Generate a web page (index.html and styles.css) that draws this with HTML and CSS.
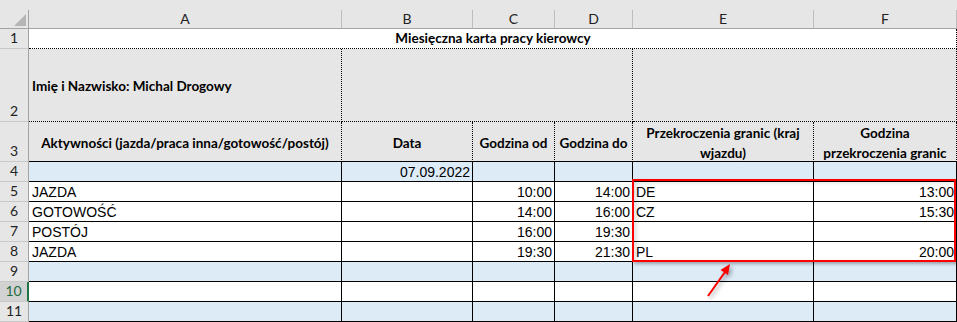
FILE: index.html
```html
<!DOCTYPE html>
<html lang="pl">
<head>
    <meta charset="UTF-8">
    <meta name="viewport" content="width=device-width, initial-scale=1.0">
    <title>Miesięczna karta pracy kierowcy</title>
    <link rel="stylesheet" href="styles.css">
</head>
<body>
    <div class="sheet">
        <!-- naglowki kolumn -->
        <div class="corner">
            <svg width="12" height="12" viewBox="0 0 12 12"><polygon points="12,0 12,12 0,12" fill="#b5b5b5"/></svg>
        </div>
        <div class="col-head">A</div>
        <div class="col-head">B</div>
        <div class="col-head">C</div>
        <div class="col-head">D</div>
        <div class="col-head">E</div>
        <div class="col-head">F</div>

        <!-- wiersz 1 -->
        <div class="row-head">1</div>
        <div class="cell title span-6">Miesięczna karta pracy kierowcy</div>

        <!-- wiersz 2 -->
        <div class="row-head">2</div>
        <div class="cell head name">Imię i Nazwisko: Michal Drogowy</div>
        <div class="cell head span-3"></div>
        <div class="cell head span-2"></div>

        <!-- wiersz 3 -->
        <div class="row-head">3</div>
        <div class="cell head th">Aktywności (jazda/praca inna/gotowość/postój)</div>
        <div class="cell head th">Data</div>
        <div class="cell head th">Godzina od</div>
        <div class="cell head th">Godzina do</div>
        <div class="cell head th">Przekroczenia granic (kraj<br>wjazdu)</div>
        <div class="cell head th">Godzina<br>przekroczenia granic</div>

        <!-- wiersz 4 -->
        <div class="row-head">4</div>
        <div class="cell band"></div>
        <div class="cell band num">07.09.2022</div>
        <div class="cell band"></div>
        <div class="cell band"></div>
        <div class="cell band"></div>
        <div class="cell band"></div>

        <!-- wiersz 5 -->
        <div class="row-head">5</div>
        <div class="cell">JAZDA</div>
        <div class="cell"></div>
        <div class="cell num">10:00</div>
        <div class="cell num">14:00</div>
        <div class="cell">DE</div>
        <div class="cell num">13:00</div>

        <!-- wiersz 6 -->
        <div class="row-head">6</div>
        <div class="cell">GOTOWOŚĆ</div>
        <div class="cell"></div>
        <div class="cell num">14:00</div>
        <div class="cell num">16:00</div>
        <div class="cell">CZ</div>
        <div class="cell num">15:30</div>

        <!-- wiersz 7 -->
        <div class="row-head">7</div>
        <div class="cell">POSTÓJ</div>
        <div class="cell"></div>
        <div class="cell num">16:00</div>
        <div class="cell num">19:30</div>
        <div class="cell"></div>
        <div class="cell"></div>

        <!-- wiersz 8 -->
        <div class="row-head">8</div>
        <div class="cell">JAZDA</div>
        <div class="cell"></div>
        <div class="cell num">19:30</div>
        <div class="cell num">21:30</div>
        <div class="cell">PL</div>
        <div class="cell num">20:00</div>

        <!-- wiersz 9 -->
        <div class="row-head">9</div>
        <div class="cell band"></div>
        <div class="cell band"></div>
        <div class="cell band"></div>
        <div class="cell band"></div>
        <div class="cell band"></div>
        <div class="cell band"></div>

        <!-- wiersz 10 (aktywna komorka A10) -->
        <div class="row-head active">10</div>
        <div class="cell"></div>
        <div class="cell"></div>
        <div class="cell"></div>
        <div class="cell"></div>
        <div class="cell"></div>
        <div class="cell"></div>

        <!-- wiersz 11 -->
        <div class="row-head">11</div>
        <div class="cell band"></div>
        <div class="cell band"></div>
        <div class="cell band"></div>
        <div class="cell band"></div>
        <div class="cell band"></div>
        <div class="cell band"></div>
    </div>

    <!-- zaznaczenie przekroczen granic -->
    <div class="callout"></div>
    <svg class="arrow" width="40" height="45" viewBox="0 0 40 45">
        <line x1="8" y1="38" x2="25" y2="14" stroke="#f00" stroke-width="2"/>
        <polygon points="30,6 28,17 20.5,12" fill="#f00"/>
    </svg>
</body>
</html>
```

FILE: styles.css
```css
body {
    margin: 0;
    background-color: #e6e6e6;
    font-family: "Liberation Sans", Arial, sans-serif;
    position: relative;
    width: 957px;
    height: 322px;
    overflow: hidden;
}

.sheet {
    display: grid;
    grid-template-columns: 29px 313px 131px 82px 78px 181px 143px;
    grid-template-rows: 29px 20px 73px 40px repeat(8, 20px);
}

.sheet > div {
    box-sizing: border-box;
}

.corner {
    margin-top: 10px;
    border-right: 1px solid #a3a3a3;
    border-bottom: 1px solid #a3a3a3;
    display: flex;
    align-items: flex-end;
    justify-content: flex-end;
    padding: 0 2px 2px 0;
}

.corner svg {
    display: block;
}

.col-head {
    margin-top: 10px;
    border-right: 1px solid #bdbdbd;
    border-bottom: 1px solid #a3a3a3;
    font-family: Lato, sans-serif;
    font-size: 14px;
    line-height: 18px;
    color: #222;
    text-align: center;
}

.row-head {
    border-right: 1px solid #a3a3a3;
    border-bottom: 1px solid #c8c8c8;
    font-family: Lato, sans-serif;
    font-size: 14px;
    line-height: 16px;
    color: #222;
    display: flex;
    align-items: flex-end;
    justify-content: center;
    padding-bottom: 2px;
}

.row-head.active {
    background-color: #d2d2d2;
    color: #1d6b40;
    border-right: 2px solid #217346;
}

.cell {
    background-color: #fff;
    border-right: 1px solid #000;
    border-bottom: 1px solid #000;
    font-size: 14px;
    line-height: 20px;
    color: #000;
    padding: 0 2px 0 3px;
    white-space: nowrap;
    overflow: hidden;
}

.cell.band {
    background-color: #ddebf7;
}

.cell.num {
    text-align: right;
}

.span-6 { grid-column: span 6; }
.span-3 { grid-column: span 3; }
.span-2 { grid-column: span 2; }

.cell.title {
    border-right: 1px dotted #000;
    border-bottom: 1px dotted #000;
    font-family: Lato, sans-serif;
    font-weight: bold;
    font-size: 13.5px;
    line-height: 19px;
    text-align: center;
}

.cell.head {
    background-color: #e7e6e6;
    border-right: 1px dotted #000;
    border-bottom: 1px dotted #000;
    font-family: Lato, sans-serif;
    font-weight: bold;
    font-size: 13.5px;
}

.cell.name {
    display: flex;
    align-items: center;
    padding-top: 2px;
}

.cell.th {
    border-bottom: 1px solid #000;
    display: flex;
    align-items: center;
    justify-content: center;
    text-align: center;
    padding: 2px 2px 0;
}

.callout {
    position: absolute;
    left: 632px;
    top: 179px;
    width: 324px;
    height: 83px;
    box-sizing: border-box;
    border: 2px solid #f00;
    box-shadow: 2px 2px 3px rgba(0, 0, 0, 0.3), inset 3px 2px 4px rgba(0, 0, 0, 0.12);
}

.arrow {
    position: absolute;
    left: 700px;
    top: 258px;
    filter: drop-shadow(2px 2px 2px rgba(0, 0, 0, 0.35));
}
```
